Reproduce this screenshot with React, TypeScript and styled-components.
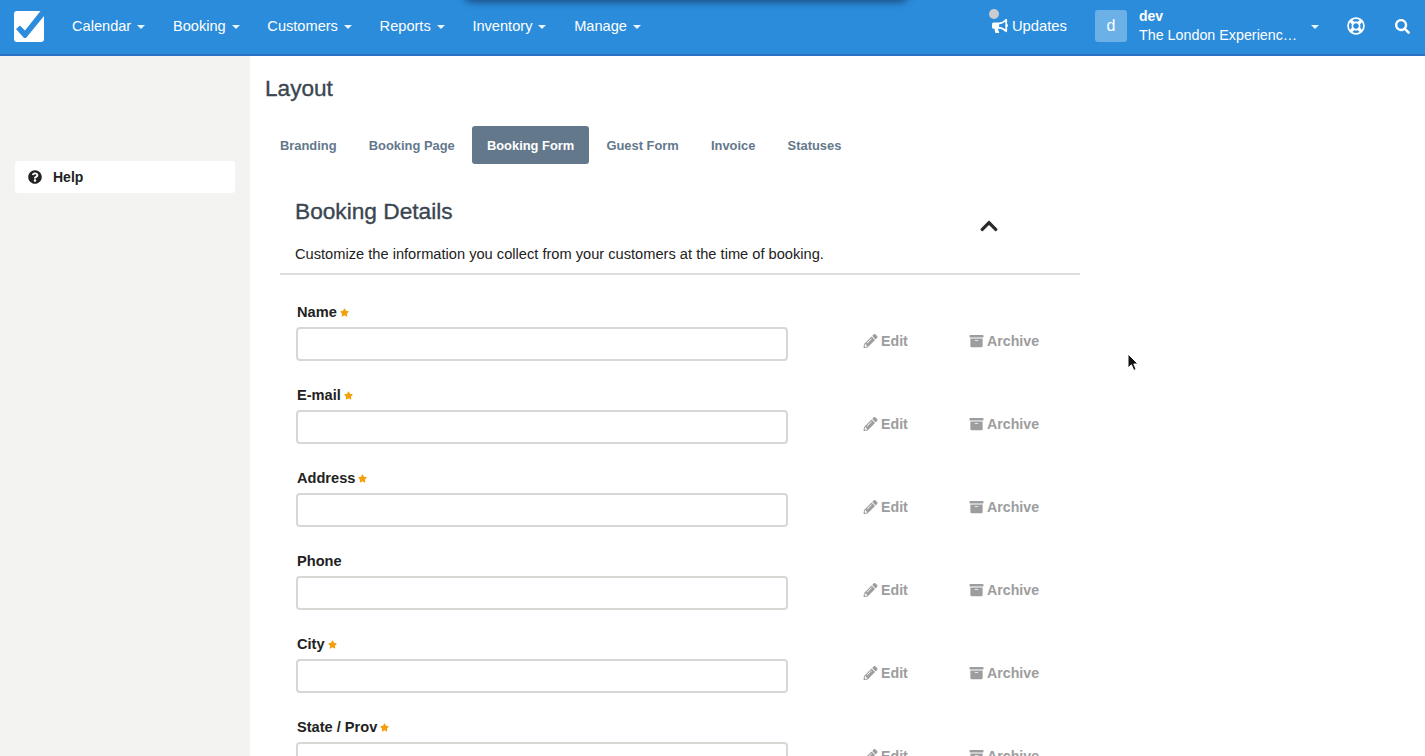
import React from "react";
import styled, { createGlobalStyle } from "styled-components";
import { FaArchive, FaBullhorn, FaChevronUp, FaRegLifeRing, FaPencilAlt, FaQuestionCircle, FaSearch, FaStar } from "react-icons/fa";

const GlobalStyle = createGlobalStyle`
  html, body { margin: 0; padding: 0; height: 100%; overflow: hidden; background: #fff; }
  body { font-family: "Liberation Sans", Arial, sans-serif; color: #222; }
  * { box-sizing: border-box; }
`;

const Page = styled.div`
  position: relative;
  height: 756px;
  display: flex;
  flex-direction: column;
  overflow: hidden;
`;

const Header = styled.header`
  position: relative;
  flex: 0 0 56px;
  height: 56px;
  display: flex;
  align-items: center;
  background: #2b8cdb;
  border-bottom: 2px solid #2a70c4;
  padding-left: 14px;
  color: #fff;
  overflow: hidden;
`;

const TopShadow = styled.div`
  position: absolute;
  left: 464px;
  top: -20px;
  width: 444px;
  height: 20px;
  border-radius: 10px;
  box-shadow: 0 0 6px 3px rgba(20, 50, 90, 0.6);
`;

const Logo = styled.svg`
  width: 30px;
  height: 31px;
  margin-top: -2px;
  flex: none;
`;

const NavList = styled.nav`
  display: flex;
  margin-left: 28px;
  gap: 27.7px;
  margin-top: -2px;
`;

const NavItem = styled.div`
  display: flex;
  align-items: center;
  font-size: 14.6px;
`;

const Caret = styled.span`
  display: inline-block;
  margin-left: 6px;
  margin-top: 2px;
  border-left: 4px solid transparent;
  border-right: 4px solid transparent;
  border-top: 4px solid #fff;
  opacity: 0.9;
`;

const HeaderRight = styled.div`
  margin-left: auto;
  display: flex;
  align-items: center;
  margin-top: -2px;
`;

const Updates = styled.div`
  position: relative;
  display: flex;
  align-items: center;
  gap: 4px;
  font-size: 14.8px;
  margin-right: 28px;
  svg { width: 16px; height: 16px; }
`;

const UpdatesDot = styled.span`
  position: absolute;
  left: -3px;
  top: -9px;
  width: 10px;
  height: 10px;
  border-radius: 50%;
  background: #c9ccd0;
`;

const Avatar = styled.div`
  width: 32px;
  height: 32px;
  border-radius: 3px;
  background: #6cb0e8;
  display: flex;
  align-items: center;
  justify-content: center;
  font-size: 16px;
  margin-right: 12px;
`;

const Account = styled.div`
  width: 166px;
  font-size: 14.3px;
  line-height: 20px;
`;

const AccountName = styled.div`
  font-size: 14px;
  font-weight: 700;
  line-height: 18px;
`;

const AccountOrg = styled.div`
  white-space: nowrap;
`;

const HeaderIcon = styled.div<{ $gap: number; $size: number }>`
  display: flex;
  margin-left: ${(p) => p.$gap}px;
  svg { width: ${(p) => p.$size}px; height: ${(p) => p.$size}px; display: block; }
`;

const Body = styled.div`
  flex: 1;
  display: flex;
  min-height: 0;
`;

const Sidebar = styled.aside`
  flex: 0 0 250px;
  background: #f3f4f1;
  padding: 105px 15px 0;
`;

const HelpCard = styled.div`
  height: 32px;
  background: #fff;
  border-radius: 3px;
  display: flex;
  align-items: center;
  padding-left: 13px;
  gap: 11px;
  font-size: 14px;
  font-weight: 700;
  svg { width: 14px; height: 14px; }
`;

const Main = styled.main`
  flex: 1;
  padding: 19px 0 0 15px;
`;

const PageTitle = styled.h1`
  margin: 0;
  font-size: 22.6px;
  line-height: 27px;
  font-weight: 400;
  -webkit-text-stroke: 0.35px #3a4651;
  color: #3a4651;
`;

const Tabs = styled.div`
  display: flex;
  gap: 2.2px;
  margin-top: 24px;
`;

const Tab = styled.div<{ $active?: boolean }>`
  height: 38px;
  padding: 0 15px;
  display: flex;
  align-items: center;
  border-radius: 3px;
  font-size: 12.9px;
  font-weight: 700;
  color: ${(p) => (p.$active ? "#fff" : "#64788c")};
  background: ${(p) => (p.$active ? "#64788c" : "transparent")};
`;

const Section = styled.section`
  width: 800px;
  margin: 19px 0 0 15px;
`;

const SectionHead = styled.div`
  position: relative;
  padding: 15px 15px 10px;
  border-bottom: 2px solid #dddeda;
  height: 92px;
`;

const SectionTitle = styled.h2`
  margin: 0;
  font-size: 22.7px;
  line-height: 27px;
  font-weight: 400;
  -webkit-text-stroke: 0.35px #3a4651;
  color: #3a4651;
`;

const SectionText = styled.p`
  margin: 20px 0 0;
  font-size: 14.65px;
  line-height: 18px;
  color: #222;
`;

const Collapse = styled.div`
  position: absolute;
  left: 699px;
  top: 33px;
  color: #2a2a2a;
  display: flex;
  svg { width: 20px; height: 20px; }
`;

const FieldList = styled.div`
  padding: 27px 0 0 16px;
  display: flex;
  flex-direction: column;
  gap: 15px;
`;

const Field = styled.div`
  display: flex;
  height: 68px;
`;

const FieldInputs = styled.div`
  width: 492px;
`;

const FieldLabel = styled.label`
  display: flex;
  align-items: center;
  height: 20px;
  margin: 0 0 5px 1px;
  font-size: 14.6px;
  font-weight: 700;
  color: #222;
  svg { width: 9px; height: 9px; margin-left: 3px; color: #f59f0b; }
`;

const TextInput = styled.input`
  display: block;
  width: 100%;
  height: 34px;
  border: 2px solid #d6d8d4;
  border-radius: 4px;
  background: #fff;
  outline: none;
`;

const Action = styled.div<{ $left: number; $width: number }>`
  display: flex;
  align-items: center;
  gap: 3px;
  margin-left: ${(p) => p.$left}px;
  width: ${(p) => p.$width}px;
  padding-top: 10px;
  height: 68px;
  font-size: 14.2px;
  font-weight: 700;
  color: #9c9d9e;
  white-space: nowrap;
  svg { width: 15px; height: 14px; flex: none; }
`;

const Cursor = styled.svg`
  position: absolute;
  left: 1127px;
  top: 353px;
  width: 12px;
  height: 19px;
`;

const navItems = ["Calendar", "Booking", "Customers", "Reports", "Inventory", "Manage"];
const tabs = ["Branding", "Booking Page", "Booking Form", "Guest Form", "Invoice", "Statuses"];
const fields = [
  { label: "Name", required: true },
  { label: "E-mail", required: true },
  { label: "Address", required: true },
  { label: "Phone", required: false },
  { label: "City", required: true },
  { label: "State / Prov", required: true },
];

export default function App() {
  return (
    <Page>
      <GlobalStyle />
      <Header>
        <TopShadow />
        <Logo viewBox="0 0 30 31">
          <rect x="0" y="0" width="30" height="31" rx="3" fill="#fff" />
          <polygon points="2,18 6,14.5 11,19.5 26.5,0 30,0 30,5 12,27 10,27" fill="#2b8cdb" />
        </Logo>
        <NavList>
          {navItems.map((item) => (
            <NavItem key={item}>{item}<Caret /></NavItem>
          ))}
        </NavList>
        <HeaderRight>
          <Updates><UpdatesDot /><FaBullhorn />Updates</Updates>
          <Avatar>d</Avatar>
          <Account>
            <AccountName>dev</AccountName>
            <AccountOrg>The London Experienc…</AccountOrg>
          </Account>
          <Caret />
          <HeaderIcon $gap={28} $size={18}><FaRegLifeRing /></HeaderIcon>
          <HeaderIcon $gap={30} $size={15}><FaSearch /></HeaderIcon>
          <HeaderIcon $gap={15} $size={0} />
        </HeaderRight>
      </Header>
      <Body>
        <Sidebar>
          <HelpCard><FaQuestionCircle />Help</HelpCard>
        </Sidebar>
        <Main>
          <PageTitle>Layout</PageTitle>
          <Tabs>
            {tabs.map((tab) => (
              <Tab key={tab} $active={tab === "Booking Form"}>{tab}</Tab>
            ))}
          </Tabs>
          <Section>
            <SectionHead>
              <SectionTitle>Booking Details</SectionTitle>
              <SectionText>Customize the information you collect from your customers at the time of booking.</SectionText>
              <Collapse><FaChevronUp /></Collapse>
            </SectionHead>
            <FieldList>
              {fields.map((field) => (
                <Field key={field.label}>
                  <FieldInputs>
                    <FieldLabel>{field.label}{field.required && <FaStar />}</FieldLabel>
                    <TextInput />
                  </FieldInputs>
                  <Action $left={75} $width={106}><FaPencilAlt />Edit</Action>
                  <Action $left={0} $width={90}><FaArchive />Archive</Action>
                </Field>
              ))}
            </FieldList>
          </Section>
        </Main>
      </Body>
      <Cursor viewBox="0 0 12 19">
        <path d="M1 1v14l3.4-3.2 2.4 5.6 2.4-1-2.4-5.4H11z" fill="#111" stroke="#fff" strokeWidth="1" />
      </Cursor>
    </Page>
  );
}
